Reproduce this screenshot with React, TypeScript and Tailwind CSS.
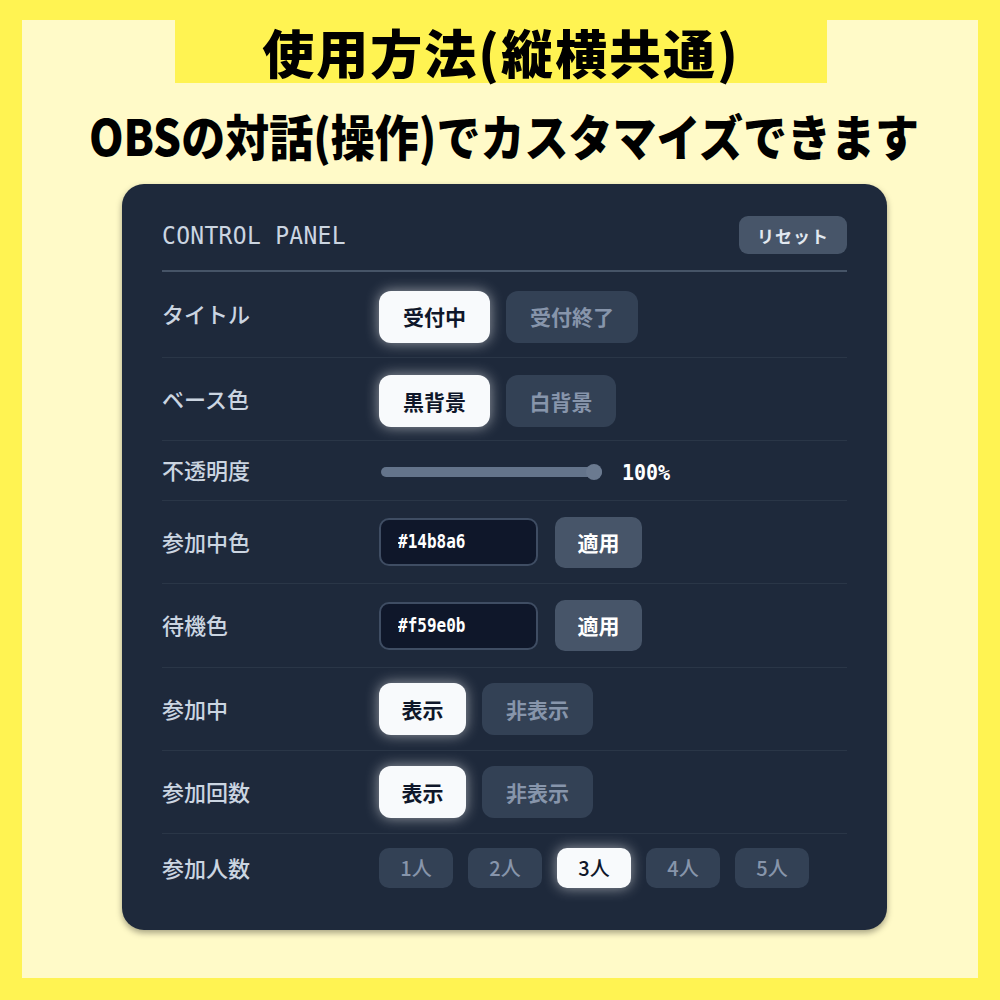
import React from "react";

const MONO = "font-['DejaVu_Sans_Mono',monospace]";

function Toggle({ text, active, w }: { text: string; active?: boolean; w: string }) {
  return (
    <div
      className={
        "h-[52px] rounded-[12px] flex items-center justify-center text-[21px] font-bold leading-none " +
        w +
        " " +
        (active
          ? "bg-[#f8fafc] text-[#0f172a] shadow-[0_0_14px_rgba(255,255,255,0.55)]"
          : "bg-[#334155] text-[#8795ab]")
      }
    >
      {text}
    </div>
  );
}

function Row({
  label,
  h,
  last,
  children,
}: {
  label: string;
  h: string;
  last?: boolean;
  children: React.ReactNode;
}) {
  return (
    <div className={"flex items-center " + h + (last ? "" : " border-b border-[#2a3647]")}>
      <div className="w-[217px] text-[22px] font-medium leading-none text-[#cbd5e1] -mt-[3px]">{label}</div>
      <div className="flex items-center">{children}</div>
    </div>
  );
}

function ColorInput({ value }: { value: string }) {
  return (
    <div className="flex items-center gap-[17px]">
      <div className="w-[159px] h-[48px] rounded-[10px] bg-[#0f172a] border-2 border-[#3f4d63] flex items-center pl-[17px]">
        <span className={MONO + " text-[16px] font-bold text-white leading-none scale-y-[1.2]"}>{value}</span>
      </div>
      <div className="w-[87px] h-[51px] rounded-[10px] bg-[#475569] flex items-center justify-center text-[21px] font-bold text-white leading-none">
        適用
      </div>
    </div>
  );
}

export default function App() {
  return (
    <div className="w-[1000px] h-[1000px] bg-[#fff352] pt-[20px] px-[22px] pb-[22px] font-['Noto_Sans_CJK_JP',sans-serif]">
      <div className="h-full bg-[#fffac8] flex flex-col">
        <div className="ml-[153px] w-[652px] h-[63px] bg-[#fff352] flex items-center justify-center">
          <h1 className="text-[52px] font-black leading-none tracking-[2px] text-black">使用方法(縦横共通)</h1>
        </div>
        <div className="mt-[30px] ml-[8px] flex justify-center">
          <p className="text-[44px] font-black leading-none text-black scale-y-[1.12]">
            OBSの対話(操作)でカスタマイズできます
          </p>
        </div>
        <div className="ml-[100px] mt-[27px] w-[765px] rounded-[22px] bg-[#1e293b] px-[40px] pt-[32px] pb-[28px] shadow-[0_3px_6px_rgba(0,0,0,0.35)]">
          <div className="flex items-center justify-between h-[38px]">
            <span className={MONO + " text-[23px] leading-none text-[#cbd5e1] tracking-[0.3px] scale-y-[1.1] origin-left"}>CONTROL PANEL</span>
            <div className="w-[108px] h-[38px] rounded-[9px] bg-[#475569] flex items-center justify-center text-[17px] font-bold text-[#e2e8f0] tracking-[1px] leading-none">
              リセット
            </div>
          </div>
          <div className="mt-[16px] h-[2px] bg-[#465467]" />

          <Row label="タイトル" h="h-[86px]">
            <div className="flex gap-[16px] pt-[4px]">
              <Toggle text="受付中" active w="w-[111px]" />
              <Toggle text="受付終了" w="w-[132px]" />
            </div>
          </Row>
          <Row label="ベース色" h="h-[83px]">
            <div className="flex gap-[16px] pt-[4px]">
              <Toggle text="黒背景" active w="w-[111px]" />
              <Toggle text="白背景" w="w-[110px]" />
            </div>
          </Row>
          <Row label="不透明度" h="h-[60px]">
            <div className="flex items-center gap-[20px] pl-[2px] pt-[3px]">
              <div className="relative w-[221px] h-[18px] flex items-center">
                <div className="w-full h-[10px] rounded-full bg-[#64748b]" />
                <div className="absolute right-0 top-[1px] w-[16px] h-[16px] rounded-full bg-[#6b7a90]" />
              </div>
              <span className={MONO + " text-[20px] font-bold text-white leading-none scale-y-[1.1]"}>100%</span>
            </div>
          </Row>
          <Row label="参加中色" h="h-[83px]">
            <ColorInput value="#14b8a6" />
          </Row>
          <Row label="待機色" h="h-[84px]">
            <ColorInput value="#f59e0b" />
          </Row>
          <Row label="参加中" h="h-[83px]">
            <div className="flex gap-[16px]">
              <Toggle text="表示" active w="w-[87px]" />
              <Toggle text="非表示" w="w-[111px]" />
            </div>
          </Row>
          <Row label="参加回数" h="h-[83px]">
            <div className="flex gap-[16px]">
              <Toggle text="表示" active w="w-[87px]" />
              <Toggle text="非表示" w="w-[111px]" />
            </div>
          </Row>
          <Row label="参加人数" h="h-[68px]" last>
            <div className="flex gap-[15px]">
              {["1人", "2人", "3人", "4人", "5人"].map((t) => (
                <div
                  key={t}
                  className={
                    "w-[74px] h-[40px] rounded-[10px] flex items-center justify-center text-[20px] font-medium leading-none " +
                    (t === "3人"
                      ? "bg-[#f8fafc] text-[#0f172a] shadow-[0_0_14px_rgba(255,255,255,0.55)]"
                      : "bg-[#334155] text-[#8795ab]")
                  }
                >
                  {t}
                </div>
              ))}
            </div>
          </Row>
        </div>
      </div>
    </div>
  );
}
